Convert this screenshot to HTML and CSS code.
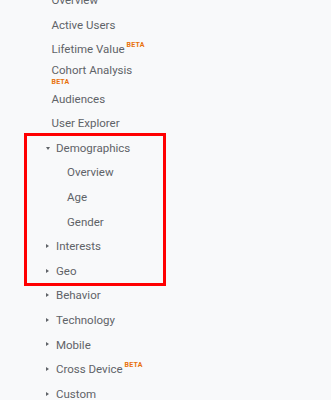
FILE: index.html
```html
<!DOCTYPE html>
<html>
<head>
<meta charset="utf-8">
<link rel="stylesheet" href="styles.css">
</head>
<body>
<ul class="nav">
  <li class="item">Overview</li>
  <li class="item">Active Users</li>
  <li class="item">Lifetime Value<sup class="beta">BETA</sup></li>
  <li class="item cohort">Cohort Analysis<span class="beta below">BETA</span></li>
  <li class="item">Audiences</li>
  <li class="item">User Explorer</li>
  <li class="group">
    <div class="highlight">
      <div class="item toggle"><span class="caret down"></span>Demographics</div>
      <div class="item sub">Overview</div>
      <div class="item sub">Age</div>
      <div class="item sub">Gender</div>
      <div class="item toggle"><span class="caret right"></span>Interests</div>
      <div class="item toggle"><span class="caret right"></span>Geo</div>
    </div>
  </li>
  <li class="item toggle"><span class="caret right"></span>Behavior</li>
  <li class="item toggle"><span class="caret right"></span>Technology</li>
  <li class="item toggle"><span class="caret right"></span>Mobile</li>
  <li class="item toggle"><span class="caret right"></span>Cross Device<sup class="beta">BETA</sup></li>
  <li class="item toggle"><span class="caret right"></span>Custom</li>
</ul>
</body>
</html>
```
FILE: styles.css
```css
html, body {
  margin: 0;
  padding: 0;
  background: #f8f9fa;
  overflow: hidden;
  height: 400px;
}
body {
  font-family: Roboto, "Noto Sans", sans-serif;
  font-size: 11.5px;
  color: #5f6368;
}
.nav {
  list-style: none;
  margin: -12px 0 0 0;
  padding: 0;
}
.item {
  height: 24.6px;
  display: flex;
  align-items: center;
  padding-left: 51.5px;
  position: relative;
  white-space: nowrap;
}
.group {
  padding-left: 24px;
  width: 142px;
}
.highlight {
  border: 3px solid #ff0000;
  margin-top: -3px;
  margin-bottom: -3px;
}
.highlight .item {
  padding-left: 29px;
}
.highlight .item.sub {
  padding-left: 40px;
}
.toggle {
  padding-left: 56px;
}
.caret {
  position: absolute;
  width: 0;
  height: 0;
  border-style: solid;
}
.caret.right {
  left: 46px;
  top: 10px;
  border-width: 2.5px 0 2.5px 3px;
  border-color: transparent transparent transparent #5f6368;
}
.caret.down {
  left: 45.5px;
  top: 11px;
  border-width: 3px 2.5px 0 2.5px;
  border-color: #5f6368 transparent transparent transparent;
}
.highlight .caret.right {
  left: 19px;
}
.highlight .caret.down {
  left: 18.5px;
}
.beta {
  color: #e8710a;
  font-size: 7px;
  font-weight: 700;
  letter-spacing: 0.2px;
  align-self: flex-start;
  margin-top: 4px;
  margin-left: 2px;
}
.cohort {
  align-items: flex-start;
  flex-direction: column;
  justify-content: flex-start;
  line-height: 17px;
}
.beta.below {
  margin: -1px 0 0 0;
  line-height: 8px;
}
```
